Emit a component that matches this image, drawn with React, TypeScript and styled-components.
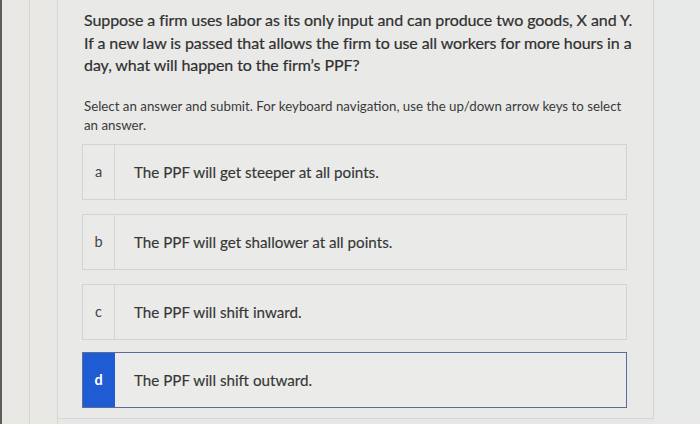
import React from "react";
import styled, { createGlobalStyle } from "styled-components";

const Global = createGlobalStyle`
  html, body { margin: 0; padding: 0; }
  body {
    width: 700px;
    height: 424px;
    overflow: hidden;
    background: #e7e7e5;
    font-family: "Lato", "Open Sans", sans-serif;
    color: #3a3a3a;
  }
`;

const Page = styled.div`
  display: flex;
  height: 424px;
  border-left: 2px solid #5c5c5c;
  box-sizing: border-box;
`;

const Gutter = styled.div<{ $w: number }>`
  width: ${(p) => p.$w}px;
  flex: none;
  border-right: 1px solid #d6d6d4;
  background: #e8e7e4;
`;

const Main = styled.main`
  width: 596px;
  flex: none;
  box-sizing: border-box;
  padding: 9px 0 0 26px;
  border-right: 1px solid #d2d4d4;
  border-bottom: 1px solid #d6d6d4;
  height: 419px;
  background: #e9e9e7;
`;

const Side = styled.div`
  flex: 1;
  background: #e8e9e9;
`;

const Question = styled.p`
  margin: 0;
  font-size: 16px;
  line-height: 22.5px;
  letter-spacing: -0.08px;
  color: #303030;
  white-space: nowrap;
  -webkit-text-stroke: 0.2px #303030;
`;

const Instructions = styled.p`
  margin: 20px 0 0;
  font-size: 13.3px;
  line-height: 19px;
  color: #3a3a3a;
  white-space: nowrap;
`;

const Options = styled.div`
  display: flex;
  flex-direction: column;
  gap: 14px;
  margin: 9px 0 0 -2px;
  width: 545px;
`;

const Option = styled.div<{ $selected?: boolean }>`
  display: flex;
  height: 56px;
  box-sizing: border-box;
  margin-top: ${(p) => (p.$selected ? "-2px" : "0")};
  border: 1px solid ${(p) => (p.$selected ? "#5b6e9a" : "#d3d3d1")};
  background: ${(p) => (p.$selected ? "#ebebe9" : "#eaeae8")};
`;

const Letter = styled.div<{ $selected?: boolean }>`
  width: 31px;
  flex: none;
  display: flex;
  align-items: center;
  justify-content: center;
  font-size: 14.5px;
  font-weight: ${(p) => (p.$selected ? 700 : 400)};
  color: ${(p) => (p.$selected ? "#ffffff" : "#444")};
  background: ${(p) => (p.$selected ? "#1f5bd2" : "transparent")};
  border-right: 1px solid ${(p) => (p.$selected ? "#1f5bd2" : "#d6d6d4")};
`;

const OptionText = styled.div`
  display: flex;
  align-items: center;
  padding-left: 19px;
  font-size: 15.2px;
  color: #363636;
  white-space: nowrap;
  -webkit-text-stroke: 0.15px #363636;
`;

const options = [
  { l: "a", t: "The PPF will get steeper at all points." },
  { l: "b", t: "The PPF will get shallower at all points." },
  { l: "c", t: "The PPF will shift inward." },
  { l: "d", t: "The PPF will shift outward.", s: true },
];

export default function App() {
  return (
    <>
      <Global />
      <Page>
        <Gutter $w={27} />
        <Gutter $w={27} />
        <Main>
          <Question>
            Suppose a firm uses labor as its only input and can produce two goods, X and Y.
            <br />
            If a new law is passed that allows the firm to use all workers for more hours in a
            <br />
            day, what will happen to the firm’s PPF?
          </Question>
          <Instructions>
            Select an answer and submit. For keyboard navigation, use the up/down arrow keys to select
            <br />
            an answer.
          </Instructions>
          <Options>
            {options.map((o) => (
              <Option key={o.l} $selected={o.s}>
                <Letter $selected={o.s}>{o.l}</Letter>
                <OptionText>{o.t}</OptionText>
              </Option>
            ))}
          </Options>
        </Main>
        <Side />
      </Page>
    </>
  );
}
